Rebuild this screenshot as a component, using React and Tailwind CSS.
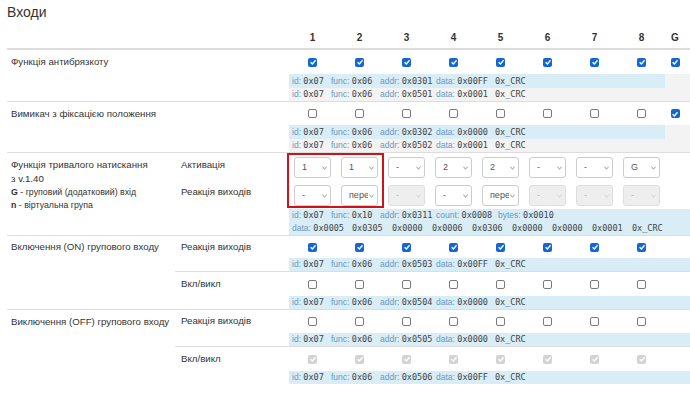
import React from "react";

const ON = "on";
const OFF = "off";
const DIS = "dis";

const tick = (
  <svg viewBox="0 0 10 10" className="w-[8px] h-[8px]">
    <path d="M2 5.3 L4.2 7.4 L8.2 2.8" fill="none" stroke="white" strokeWidth="1.7" />
  </svg>
);

function Box({ state }) {
  if (state === ON)
    return <span className="w-[9px] h-[9px] rounded-[2px] bg-[#1466d6] flex items-center justify-center">{tick}</span>;
  if (state === DIS)
    return <span className="w-[9px] h-[9px] rounded-[2px] bg-[#d3d3d3] flex items-center justify-center">{tick}</span>;
  return <span className="w-[9px] h-[9px] rounded-[2px] border border-[#7a7a7a] bg-white" />;
}

function Boxes({ states, g }) {
  return (
    <>
      {states.map((s, i) => (
        <div key={i} className="w-[47px] flex justify-center">
          <Box state={s} />
        </div>
      ))}
      <div className="w-[20px] flex justify-center">{g && <Box state={g} />}</div>
    </>
  );
}

function Sel({ v, off }) {
  return (
    <div className="w-[47px] flex justify-center">
      <div
        className={`w-[37px] h-[21px] rounded-[3px] border flex items-center pl-[7px] pr-[3px] text-[9px] ${
          off ? "bg-[#eeeeee] border-[#dedede] text-[#b5b5b5]" : "bg-white border-[#cccccc] text-[#555]"
        }`}
      >
        <span className="flex-1 overflow-hidden whitespace-nowrap">{v}</span>
        <svg viewBox="0 0 8 5" className="w-[5px] h-[4px] shrink-0 ml-[1px]">
          <path d="M0.7 0.8 L4 4 L7.3 0.8" fill="none" stroke={off ? "#c4c4c4" : "#666"} strokeWidth="1.3" />
        </svg>
      </div>
    </div>
  );
}

function Item({ k, v, w }) {
  return (
    <span className={`inline-block whitespace-nowrap ${w || ""}`}>
      {k && <span className="text-[#6b98bd]">{k}: </span>}
      <span className="font-['DejaVu_Sans_Mono',monospace] text-[#444]">{v}</span>
    </span>
  );
}

// blue cell over the 8 columns, grey G cell after it
function Info({ children, kind, h = "h-[13px]" }) {
  if (kind === "grey")
    return <div className={`${h} flex items-center pl-[3px] bg-[#f3f3f3] text-[8.5px]`}>{children}</div>;
  if (kind === "full")
    return <div className={`${h} flex items-center pl-[3px] bg-[#d9edf7] text-[8.5px]`}>{children}</div>;
  return (
    <div className={`${h} flex text-[8.5px]`}>
      <div className="w-[376px] flex items-center pl-[3px] bg-[#d9edf7]">{children}</div>
      <div className="flex-1 bg-[#f3f3f3]" />
    </div>
  );
}

function Frame({ id, func, addr, data }) {
  return (
    <>
      <Item k="id" v={id || "0x07"} w="w-[39px]" />
      <Item k="func" v={func || "0x06"} w="w-[49px]" />
      <Item k="addr" v={addr} w="w-[56px]" />
      <Item k="data" v={data} w="w-[59px]" />
      <Item v="0x_CRC" />
    </>
  );
}

const all = (s) => Array(8).fill(s);

export default function App() {
  return (
    <div className="w-[690px] h-[395px] overflow-hidden bg-white text-[#333] text-[9.7px] font-['Liberation_Sans',Arial,sans-serif] pl-[7px]">
      <div className="h-[26px] text-[14px] leading-[25px]">Входи</div>

      {/* column heads */}
      <div className="flex h-[24px] items-center border-b-2 border-[#dddddd] font-bold text-[10px]">
        <div className="w-[282px]" />
        {["1", "2", "3", "4", "5", "6", "7", "8"].map((n) => (
          <div key={n} className="w-[47px] text-center">{n}</div>
        ))}
        <div className="w-[20px] text-center">G</div>
      </div>

      {/* debounce */}
      <div className="flex border-b border-[#dddddd]">
        <div className="w-[168px] pl-[4px] leading-[24px]">Функція антибрязкоту</div>
        <div className="flex-1">
          <div className="flex h-[24px] items-center">
            <div className="w-[114px]" />
            <Boxes states={all(ON)} g={ON} />
          </div>
          <div className="pl-[114px]">
            <Info h="h-[14px]"><Frame addr="0x0301" data="0x00FF" /></Info>
            <Info kind="grey"><Frame addr="0x0501" data="0x0001" /></Info>
          </div>
        </div>
      </div>

      {/* latching switch */}
      <div className="flex border-b border-[#dddddd]">
        <div className="w-[168px] pl-[4px] leading-[23px]">Вимикач з фіксацією положення</div>
        <div className="flex-1">
          <div className="flex h-[23px] items-center">
            <div className="w-[114px]" />
            <Boxes states={all(OFF)} g={ON} />
          </div>
          <div className="pl-[114px]">
            <Info h="h-[14px]"><Frame addr="0x0302" data="0x0000" /></Info>
            <Info kind="grey"><Frame addr="0x0502" data="0x0001" /></Info>
          </div>
        </div>
      </div>

      {/* long press */}
      <div className="relative flex border-b border-[#dddddd]">
        <div className="w-[168px] pl-[4px] pt-[5px]">
          <div className="leading-[14px]">Функція тривалого натискання</div>
          <div className="leading-[14px]">з v.1.40</div>
          <div className="text-[8.8px] leading-[13px]"><b>G</b> - груповий (додатковий) вхід</div>
          <div className="text-[8.8px] leading-[13px]"><b>n</b> - віртуальна група</div>
        </div>
        <div className="flex-1">
          <div className="flex h-[29px] items-center">
            <div className="w-[114px] pl-[6px] self-start pt-[5px] leading-[14px]">Активація</div>
            {["1", "1", "-", "2", "2", "-", "-", "G"].map((v, i) => (
              <Sel key={i} v={v} />
            ))}
          </div>
          <div className="flex h-[27px] items-center">
            <div className="w-[114px] pl-[6px] self-start pt-[3px] leading-[14px]">Реакція виходів</div>
            <Sel v="-" />
            <Sel v="перемикання" />
            <Sel v="-" off />
            <Sel v="-" />
            <Sel v="перемикання" />
            <Sel v="-" off />
            <Sel v="-" off />
            <Sel v="-" off />
          </div>
          <div className="pl-[114px]">
            <Info kind="full">
              <Item k="id" v="0x07" w="w-[39px]" />
              <Item k="func" v="0x10" w="w-[49px]" />
              <Item k="addr" v="0x0311" w="w-[56px]" />
              <Item k="count" v="0x0008" w="w-[62px]" />
              <Item k="bytes" v="0x0010" />
            </Info>
            <Info kind="full">
              <Item k="data" v="0x0005" w="w-[60px]" />
              {["0x0305", "0x0000", "0x0006", "0x0306", "0x0000", "0x0000", "0x0001"].map((v, i) => (
                <Item key={i} v={v} w="w-[40px]" />
              ))}
              <Item v="0x_CRC" />
            </Info>
          </div>
        </div>
        <div className="absolute left-[280px] top-0 w-[97px] h-[55px] border-2 border-[#d0131b]" />
      </div>

      {/* group ON */}
      <div className="flex border-b border-[#dddddd]">
        <div className="w-[168px] pl-[4px] leading-[22px]">Включення (ON) групового входу</div>
        <div className="flex-1">
          <div className="flex h-[22px] items-center">
            <div className="w-[114px] pl-[6px]">Реакція виходів</div>
            <Boxes states={all(ON)} />
          </div>
          <div className="pl-[114px]">
            <Info kind="full"><Frame addr="0x0503" data="0x00FF" /></Info>
          </div>
          <div className="border-t border-[#dddddd]">
            <div className="flex h-[24px] items-center">
              <div className="w-[114px] pl-[6px]">Вкл/викл</div>
              <Boxes states={all(OFF)} />
            </div>
            <div className="pl-[114px]">
              <Info kind="full"><Frame addr="0x0504" data="0x0000" /></Info>
            </div>
          </div>
        </div>
      </div>

      {/* group OFF */}
      <div className="flex">
        <div className="w-[168px] pl-[4px] leading-[23px]">Виключення (OFF) групового входу</div>
        <div className="flex-1">
          <div className="flex h-[23px] items-center">
            <div className="w-[114px] pl-[6px]">Реакція виходів</div>
            <Boxes states={all(OFF)} />
          </div>
          <div className="pl-[114px]">
            <Info kind="full"><Frame addr="0x0505" data="0x0000" /></Info>
          </div>
          <div className="border-t border-[#dddddd]">
            <div className="flex h-[24px] items-center">
              <div className="w-[114px] pl-[6px]">Вкл/викл</div>
              <Boxes states={all(DIS)} />
            </div>
            <div className="pl-[114px]">
              <Info kind="full"><Frame addr="0x0506" data="0x00FF" /></Info>
            </div>
          </div>
        </div>
      </div>
    </div>
  );
}
